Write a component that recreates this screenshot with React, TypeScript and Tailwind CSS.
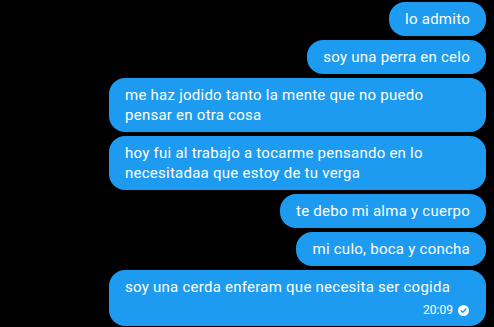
const messages: { text: string; lines?: string[] }[] = [
  { text: "lo admito" },
  { text: "soy una perra en celo" },
  {
    text: "",
    lines: ["me haz jodido tanto la mente que no puedo", "pensar en otra cosa"],
  },
  {
    text: "",
    lines: ["hoy fui al trabajo a tocarme pensando en lo", "necesitadaa que estoy de tu verga"],
  },
  { text: "te debo mi alma y cuerpo" },
  { text: "mi culo, boca y concha" },
];

function CheckIcon() {
  return (
    <svg width="11" height="11" viewBox="0 0 12 12" className="ml-[5px]">
      <circle cx="6" cy="6" r="6" fill="white" />
      <path
        d="M3.4 6.2 L5.2 7.9 L8.6 4.3"
        fill="none"
        stroke="#1d9bf0"
        strokeWidth="1.6"
        strokeLinecap="round"
        strokeLinejoin="round"
      />
    </svg>
  );
}

export default function App() {
  return (
    <div
      className="w-[494px] h-[327px] bg-black overflow-hidden flex flex-col items-end gap-1 pt-[2px] pr-2 text-white text-[15px] leading-5 tracking-[0.25px]"
      style={{ fontFamily: "Roboto, 'Liberation Sans', sans-serif" }}
    >
      {messages.map((m, i) => (
        <div
          key={i}
          className={`bg-[#1d9bf0] rounded-2xl px-4 py-[7px] ${m.lines ? "w-[377px]" : ""}`}
        >
          {m.lines ? (
            m.lines.map((l, j) => <div key={j}>{l}</div>)
          ) : (
            <div>{m.text}</div>
          )}
        </div>
      ))}
      <div className="bg-[#1d9bf0] rounded-2xl px-4 pt-[7px] pb-[6px] w-[377px]">
        <div>soy una cerda enferam que necesita ser cogida</div>
        <div className="flex items-center justify-end h-5 mt-[3px] text-[12px] tracking-normal pr-[1px]">
          <span>20:09</span>
          <CheckIcon />
        </div>
      </div>
    </div>
  );
}
